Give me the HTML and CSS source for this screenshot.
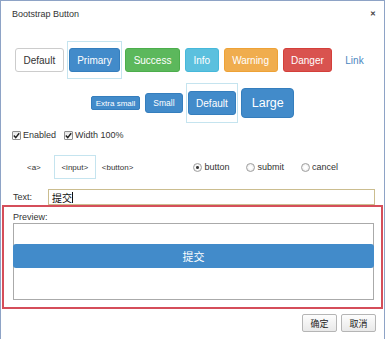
FILE: index.html
```html
<!DOCTYPE html>
<html lang="zh">
<head>
    <meta charset="UTF-8">
    <title>Bootstrap Button</title>
    <link rel="stylesheet" href="styles.css">
</head>
<body>
  <div class="window">
    <div class="titlebar">
      <span class="title">Bootstrap Button</span>
      <span class="close">&#x2715;</span>
    </div>

    <div class="styles-row">
      <span class="btn btn-default">Default</span>
      <span class="pick"><span class="btn btn-primary">Primary</span></span>
      <span class="btn btn-success">Success</span>
      <span class="btn btn-info">Info</span>
      <span class="btn btn-warning">Warning</span>
      <span class="btn btn-danger">Danger</span>
      <span class="btn-link">Link</span>
    </div>

    <div class="sizes-row">
      <span class="btn btn-primary btn-xs">Extra small</span>
      <span class="btn btn-primary btn-sm">Small</span>
      <span class="pick"><span class="btn btn-primary">Default</span></span>
      <span class="btn btn-primary btn-lg">Large</span>
    </div>

    <div class="checks-row">
      <span class="check"><span class="box"><svg width="7" height="7" viewBox="0 0 7 7"><path d="M0.8 3.6 L2.7 5.6 L6.2 1.2" fill="none" stroke="#222" stroke-width="1.4"/></svg></span>Enabled</span>
      <span class="check"><span class="box"><svg width="7" height="7" viewBox="0 0 7 7"><path d="M0.8 3.6 L2.7 5.6 L6.2 1.2" fill="none" stroke="#222" stroke-width="1.4"/></svg></span>Width 100%</span>
    </div>

    <div class="tags-row">
      <span class="tag tag-a">&lt;a&gt;</span>
      <span class="tag tag-input">&lt;input&gt;</span>
      <span class="tag tag-button">&lt;button&gt;</span>
      <div class="radios">
        <span class="radio"><span class="dot on"></span>button</span>
        <span class="radio"><span class="dot"></span>submit</span>
        <span class="radio"><span class="dot"></span>cancel</span>
      </div>
    </div>

    <div class="text-row">
      <span class="label">Text:</span>
      <div class="field">提交<span class="caret"></span></div>
    </div>

    <div class="preview">
      <div class="label">Preview:</div>
      <div class="canvas">
        <div class="block-btn">提交</div>
      </div>
    </div>

    <div class="footer">
      <span class="dlg-btn">确定</span>
      <span class="dlg-btn">取消</span>
    </div>
  </div>
</body>
</html>
```

FILE: styles.css
```css
body {
  margin: 0;
  background: #fff;
  font-family: "Liberation Sans", Arial, "Noto Sans CJK SC", sans-serif;
  color: #333;
}

.window {
  width: 385px;
  height: 339px;
  box-sizing: border-box;
  border: 1px solid #8ea3c6;
  border-bottom: none;
}

.titlebar {
  height: 26px;
  display: flex;
  align-items: center;
  justify-content: space-between;
  padding: 0 8px 0 11px;
}

.title {
  font-size: 9px;
  color: #333;
}

.close {
  font-size: 7px;
  font-weight: bold;
  color: #444;
}

/* buttons */
.btn {
  display: inline-flex;
  align-items: center;
  justify-content: center;
  box-sizing: border-box;
  height: 24px;
  padding: 0 7.5px;
  border: 1px solid transparent;
  border-radius: 3px;
  font-size: 10px;
  color: #fff;
  white-space: nowrap;
}

.btn-default { background: #fff; border-color: #ccc; color: #333; }
.btn-primary { background: #428bca; border-color: #357ebd; }
.btn-success { background: #5cb85c; border-color: #4cae4c; }
.btn-info    { background: #5bc0de; border-color: #46b8da; }
.btn-warning { background: #f0ad4e; border-color: #eea236; }
.btn-danger  { background: #d9534f; border-color: #d43f3a; }

.btn-link {
  padding: 0 8px;
  font-size: 10px;
  color: #4a86c0;
}

.btn-xs { height: 14px; padding: 0 4px; font-size: 8px; border-radius: 2px; }
.btn-sm { height: 20px; padding: 0 7px; font-size: 8.5px; }
.btn-lg { height: 30px; padding: 0 9.5px; font-size: 12.5px; border-radius: 4px; }

.pick {
  display: inline-flex;
  padding: 6px 1px;
  margin: 0 -2px;
  border: 1px solid #c5e4ef;
}

.styles-row {
  display: flex;
  align-items: center;
  gap: 5px;
  margin-top: 14px;
  padding-left: 14px;
}

.sizes-row {
  display: flex;
  align-items: center;
  justify-content: center;
  gap: 5px;
  margin-top: 4px;
}

.sizes-row .pick {
  padding: 7px 1px;
}

/* checkboxes */
.checks-row {
  display: flex;
  align-items: center;
  height: 14px;
  margin-top: 5px;
  padding-left: 11px;
  gap: 8px;
  font-size: 9px;
}

.check {
  display: inline-flex;
  align-items: center;
  gap: 2px;
}

.box {
  display: inline-flex;
  align-items: center;
  justify-content: center;
  width: 9px;
  height: 9px;
  box-sizing: border-box;
  border: 1px solid #8f8f8f;
  border-radius: 1px;
  background: linear-gradient(#e6e6e6, #fff);
}

/* element tags + radios */
.tags-row {
  display: flex;
  align-items: center;
  height: 24px;
  margin-top: 13px;
  font-size: 8px;
}

.tag-a { margin-left: 26px; }

.tag-input {
  display: inline-flex;
  align-items: center;
  justify-content: center;
  box-sizing: border-box;
  width: 42px;
  height: 24px;
  margin-left: 13px;
  border: 1px solid #c5e4ef;
}

.tag-button { margin-left: 6px; }

.radios {
  display: flex;
  align-items: center;
  gap: 17px;
  margin-left: 60px;
  font-size: 9px;
}

.radio {
  display: inline-flex;
  align-items: center;
  gap: 2px;
}

.dot {
  width: 9px;
  height: 9px;
  box-sizing: border-box;
  border: 1px solid #a0a0a0;
  border-radius: 50%;
  background: radial-gradient(circle, #fff 30%, #ddd 100%);
}

.dot.on {
  background: radial-gradient(circle, #333 0, #444 25%, #fff 35%, #e0e0e0 100%);
}

/* text field */
.text-row {
  display: flex;
  align-items: center;
  margin-top: 10px;
  padding-left: 12px;
}

.text-row .label {
  width: 35px;
  font-size: 9px;
}

.field {
  display: flex;
  align-items: center;
  box-sizing: border-box;
  width: 327px;
  height: 16px;
  padding-left: 3px;
  border: 1px solid #cbbd8f;
  font-family: "Noto Sans CJK SC", sans-serif;
  font-size: 10px;
  color: #111;
}

.caret {
  width: 1px;
  height: 11px;
  background: #111;
}

/* preview */
.preview {
  box-sizing: border-box;
  height: 104px;
  margin: 0 1px;
  padding: 4px 7px 0 9px;
  border: 2px solid #d54e5a;
}

.preview .label {
  height: 12px;
  line-height: 12px;
  font-size: 9px;
}

.canvas {
  box-sizing: border-box;
  height: 77px;
  padding-top: 20px;
  border: 1px solid #aaa;
}

.block-btn {
  display: flex;
  align-items: center;
  justify-content: center;
  height: 24px;
  margin: 0 -1px;
  border-radius: 3px;
  background: #428bca;
  color: #fff;
  font-family: "Noto Sans CJK SC", sans-serif;
  font-size: 11px;
}

/* dialog buttons */
.footer {
  display: flex;
  justify-content: flex-end;
  gap: 4px;
  margin-top: 5px;
  padding-right: 8px;
}

.dlg-btn {
  display: inline-flex;
  align-items: center;
  justify-content: center;
  box-sizing: border-box;
  width: 35px;
  height: 18px;
  border: 1px solid #b5b5b5;
  border-radius: 2px;
  background: linear-gradient(#fdfdfd, #e9e9e9);
  font-family: "Noto Sans CJK SC", sans-serif;
  font-size: 9px;
  color: #222;
}
```
